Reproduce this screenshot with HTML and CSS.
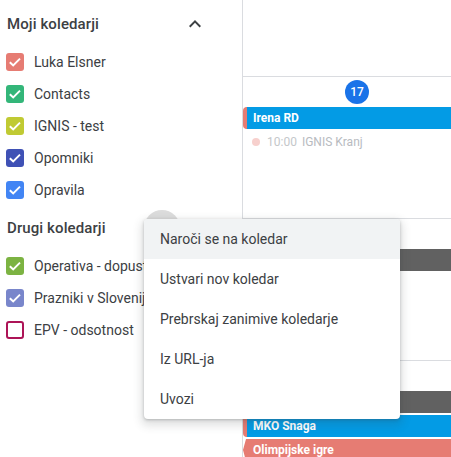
FILE: index.html
```html
<!DOCTYPE html>
<html lang="sl">
<head>
<meta charset="utf-8">
<title>Koledar</title>
<link rel="stylesheet" href="styles.css">
</head>
<body>
<div class="app">
  <aside class="sidebar">
    <section class="cal-group">
      <div class="group-header">
        <span class="group-title">Moji koledarji</span>
        <div class="group-actions">
          <span class="icon-btn chevron"><svg viewBox="0 0 24 24" width="24" height="24"><path d="M12 8l-6 6 1.41 1.41L12 10.83l4.59 4.58L18 14z"/></svg></span>
        </div>
      </div>
      <ul class="cal-list">
        <li class="cal-item"><span class="cb cb-flamingo"><svg viewBox="0 0 18 18"><polyline points="3.8,9.2 7.2,12.4 14,5.6"/></svg></span><span class="cal-name">Luka Elsner</span></li>
        <li class="cal-item"><span class="cb cb-sage"><svg viewBox="0 0 18 18"><polyline points="3.8,9.2 7.2,12.4 14,5.6"/></svg></span><span class="cal-name">Contacts</span></li>
        <li class="cal-item"><span class="cb cb-citron"><svg viewBox="0 0 18 18"><polyline points="3.8,9.2 7.2,12.4 14,5.6"/></svg></span><span class="cal-name">IGNIS - test</span></li>
        <li class="cal-item"><span class="cb cb-blueberry"><svg viewBox="0 0 18 18"><polyline points="3.8,9.2 7.2,12.4 14,5.6"/></svg></span><span class="cal-name">Opomniki</span></li>
        <li class="cal-item"><span class="cb cb-cobalt"><svg viewBox="0 0 18 18"><polyline points="3.8,9.2 7.2,12.4 14,5.6"/></svg></span><span class="cal-name">Opravila</span></li>
      </ul>
    </section>
    <section class="cal-group">
      <div class="group-header">
        <span class="group-title">Drugi koledarji</span>
        <div class="group-actions">
          <span class="icon-btn add hovered"></span>
          <span class="icon-btn chevron"><svg viewBox="0 0 24 24" width="24" height="24"><path d="M12 8l-6 6 1.41 1.41L12 10.83l4.59 4.58L18 14z"/></svg></span>
        </div>
      </div>
      <ul class="cal-list">
        <li class="cal-item"><span class="cb cb-basil"><svg viewBox="0 0 18 18"><polyline points="3.8,9.2 7.2,12.4 14,5.6"/></svg></span><span class="cal-name">Operativa - dopust</span></li>
        <li class="cal-item"><span class="cb cb-lavender"><svg viewBox="0 0 18 18"><polyline points="3.8,9.2 7.2,12.4 14,5.6"/></svg></span><span class="cal-name">Prazniki v Sloveniji</span></li>
        <li class="cal-item"><span class="cb cb-off cb-beetroot"></span><span class="cal-name">EPV - odsotnost</span></li>
      </ul>
    </section>
  </aside>

  <main class="calendar">
    <div class="week week-top">
      <div class="day"></div>
    </div>
    <div class="week">
      <div class="day">
        <div class="date-row"><span class="date today">17</span></div>
        <div class="event bar ev-peacock accent-flamingo">Irena RD</div>
        <div class="event timed"><span class="dot"></span><span class="time">10:00</span><span class="title">IGNIS Kranj</span></div>
      </div>
    </div>
    <div class="week">
      <div class="day">
        <div class="date-row"><span class="date">24</span></div>
        <div class="event bar ev-graphite"></div>
      </div>
    </div>
    <div class="week week-last">
      <div class="day">
        <div class="date-row"><span class="date">1</span></div>
        <div class="event bar ev-graphite"></div>
        <div class="event bar ev-peacock accent-flamingo">MKO Snaga</div>
        <div class="event bar ev-flamingo continued">Olimpijske igre</div>
      </div>
    </div>
  </main>
</div>

<div class="menu">
  <div class="menu-item active">Naroči se na koledar</div>
  <div class="menu-item">Ustvari nov koledar</div>
  <div class="menu-item">Prebrskaj zanimive koledarje</div>
  <div class="menu-item">Iz URL-ja</div>
  <div class="menu-item">Uvozi</div>
</div>
</body>
</html>
```

FILE: styles.css
```css
* { box-sizing: border-box; }

html, body {
  margin: 0;
  padding: 0;
  width: 451px;
  height: 457px;
  overflow: hidden;
  background: #fff;
  font-family: Roboto, "Noto Sans", Arial, sans-serif;
  color: #3c4043;
}

.app {
  display: flex;
  width: 451px;
  height: 457px;
}

/* Sidebar */
.sidebar {
  flex: 0 0 242px;
  width: 242px;
  padding: 4px 32px 0 0;
}

.cal-group + .cal-group { margin-top: 2px; }

.group-header {
  display: flex;
  align-items: center;
  justify-content: space-between;
  height: 40px;
  padding-left: 7px;
}

.group-title {
  font-size: 15px;
  font-weight: 500;
  color: #3c4043;
  letter-spacing: 0.1px;
}

.group-actions {
  display: flex;
  align-items: center;
}

.icon-btn {
  display: flex;
  align-items: center;
  justify-content: center;
  width: 30px;
  height: 30px;
}

.icon-btn svg { fill: #3c4043; }

.icon-btn.add {
  width: 36px;
  height: 36px;
  border-radius: 50%;
}

.icon-btn.hovered { background: #dcdcdc; }

.cal-list {
  list-style: none;
  margin: 2px 0 0;
  padding: 0;
}

.cal-item {
  display: flex;
  align-items: center;
  height: 32px;
  padding-left: 6px;
  white-space: nowrap;
}

.cb {
  flex: 0 0 18px;
  width: 18px;
  height: 18px;
  border-radius: 3px;
  margin-right: 10px;
  display: flex;
}

.cb svg {
  width: 18px;
  height: 18px;
  fill: none;
  stroke: #fff;
  stroke-width: 2;
}

.cal-name {
  font-size: 14px;
  color: #3c4043;
}

.cb-flamingo { background: #e67c73; }
.cb-sage { background: #33b679; }
.cb-citron { background: #c0ca33; }
.cb-blueberry { background: #3f51b5; }
.cb-cobalt { background: #4285f4; }
.cb-basil { background: #7cb342; }
.cb-lavender { background: #7986cb; }
.cb-off { background: #fff; border: 2px solid; }
.cb-beetroot { border-color: #ad1457; }

/* Calendar */
.calendar {
  flex: 1 1 auto;
  border-left: 1px solid #dadce0;
  overflow: hidden;
  display: flex;
  flex-direction: column;
}

.week {
  flex: 0 0 142px;
  border-bottom: 1px solid #dadce0;
}

.week-top { flex-basis: 77px; }
.week-last { flex: 1 1 auto; border-bottom: 0; }

.day {
  width: 228px;
}

.date-row {
  display: flex;
  justify-content: center;
  padding-top: 3px;
  height: 30px;
}

.date {
  width: 24px;
  height: 24px;
  border-radius: 50%;
  display: flex;
  align-items: center;
  justify-content: center;
  font-size: 12px;
  font-weight: 500;
  color: #3c4043;
}

.date.today {
  background: #1a73e8;
  color: #fff;
}

.event {
  height: 22px;
  margin-bottom: 2px;
  display: flex;
  align-items: center;
  font-size: 12px;
  white-space: nowrap;
}

.bar {
  border-radius: 4px;
  padding-left: 10px;
  color: #fff;
  font-weight: 700;
}

.ev-peacock { background: #039be5; }
.ev-graphite { background: #616161; }
.ev-flamingo { background: #e67c73; }

.accent-flamingo {
  border-left: 4px solid #e67c73;
  padding-left: 6px;
}

.continued {
  border-radius: 0 4px 4px 0;
  clip-path: polygon(3px 0, 100% 0, 100% 100%, 3px 100%, 0 50%);
}

.timed {
  padding-left: 9px;
  color: #bdc1c6;
}

.dot {
  width: 8px;
  height: 8px;
  border-radius: 50%;
  background: #f7d0cd;
  margin-right: 7px;
}

.time { margin-right: 5px; color: #c4c7ca; }
.title { color: #b8bbbf; }

/* Overlay menu */
.menu {
  position: absolute;
  left: 144px;
  top: 219px;
  width: 256px;
  background: #fff;
  border-radius: 4px;
  box-shadow: 0 4px 8px 3px rgba(60, 64, 67, 0.15), 0 1px 3px rgba(60, 64, 67, 0.3);
  overflow: hidden;
}

.menu-item {
  height: 40px;
  display: flex;
  align-items: center;
  padding-left: 16px;
  font-size: 14px;
  color: #3c4043;
}

.menu-item.active { background: #f1f3f4; }
```
